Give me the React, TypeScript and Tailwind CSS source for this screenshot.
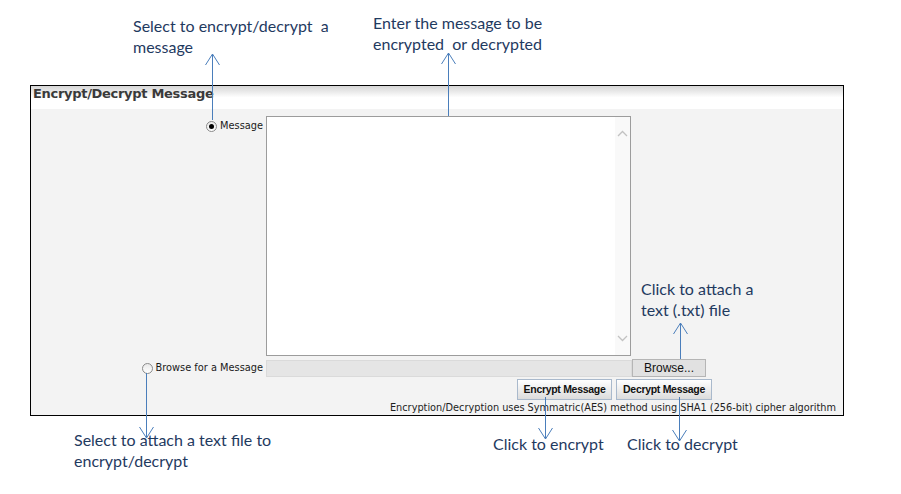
import React from "react";

const note = "absolute text-[16px] leading-[21px] text-[#1f3a5f] whitespace-pre [font-family:Lato,'Open_Sans',sans-serif]";

function Radio({ checked }: { checked?: boolean }) {
  return (
    <span className="w-[11px] h-[11px] rounded-full border border-[#8a8a8a] bg-gradient-to-b from-[#e8e8e8] to-white flex items-center justify-center shrink-0">
      {checked ? <span className="w-[5px] h-[5px] rounded-full bg-black" /> : null}
    </span>
  );
}

function Arrow({ x, y1, y2, up }: { x: number; y1: number; y2: number; up?: boolean }) {
  const tip = up ? y1 : y2;
  const d = up ? 11 : -11;
  return (
    <g stroke="#4a7ebb" strokeWidth={1} fill="none">
      <line x1={x + 0.5} y1={y1} x2={x + 0.5} y2={y2} />
      <polyline points={`${x - 6.5},${tip + d} ${x + 0.5},${tip} ${x + 7.5},${tip + d}`} />
    </g>
  );
}

export default function App() {
  return (
    <div className="relative w-[901px] h-[494px] bg-white overflow-hidden">
      <div className="ml-[30px] mt-[85px] w-[814px] h-[331px] border border-black flex flex-col [font-family:'DejaVu_Sans',Verdana,sans-serif]">
        <div className="h-[23px] shrink-0 bg-gradient-to-b from-[#d6d6d6] via-white to-white pl-[2px] leading-[13px]">
          <span className="text-[13px] leading-[13px] font-bold text-[#3a3a3a] tracking-[-0.3px]">Encrypt/Decrypt Message</span>
        </div>
        <div className="flex-1 bg-[#f3f3f3] pt-[7px] flex flex-col">
          <div className="flex">
            <div className="w-[232px] flex justify-end items-center gap-[3px] pt-[4px] self-start">
              <Radio checked />
              <span className="text-[9.8px] leading-[12px] text-[#1a1a1a]">Message</span>
            </div>
            <div className="ml-[3px] w-[365px] h-[240px] border border-[#9c9c9c] bg-white flex justify-end">
              <div className="w-[15px] h-full bg-[#f9f9f9] flex flex-col items-center justify-between py-[13px]">
                <svg width="11" height="7" viewBox="0 0 11 7"><polyline points="1,6 5.5,1.5 10,6" fill="none" stroke="#c2c2c2" strokeWidth="1.3" /></svg>
                <svg width="11" height="7" viewBox="0 0 11 7"><polyline points="1,1 5.5,5.5 10,1" fill="none" stroke="#c2c2c2" strokeWidth="1.3" /></svg>
              </div>
            </div>
          </div>
          <div className="flex mt-[3px] items-center">
            <div className="w-[232px] flex justify-end items-center gap-[3px]">
              <Radio />
              <span className="text-[9.8px] leading-[12px] text-[#1a1a1a]">Browse for a Message</span>
            </div>
            <div className="ml-[3px] w-[366px] h-[17px] bg-[#e5e5e5] border border-[#dadada]" />
            <div className="w-[74px] h-[18px] bg-[#e1e1e1] border border-[#b5b5b5] flex items-center justify-center text-[12px] text-[#111] [font-family:'Liberation_Sans',Arial,sans-serif]">
              Browse...
            </div>
          </div>
          <div className="flex gap-[4px] mt-[2px] ml-[486px]">
            <div className="w-[95px] h-[21px] border border-[#a9b9cc] bg-gradient-to-b from-white to-[#dcdcdc] flex items-center justify-center text-[10.5px] tracking-[-0.3px] font-bold text-[#111] [font-family:'Liberation_Sans',Arial,sans-serif]">
              Encrypt Message
            </div>
            <div className="w-[96px] h-[21px] border border-[#a9b9cc] bg-gradient-to-b from-white to-[#dcdcdc] flex items-center justify-center text-[10.5px] tracking-[-0.3px] font-bold text-[#111] [font-family:'Liberation_Sans',Arial,sans-serif]">
              Decrypt Message
            </div>
          </div>
          <div className="flex justify-end pr-[7px] mt-[2px]">
            <span className="text-[9.75px] leading-[12px] text-[#1e1e1e]">Encryption/Decryption uses Symmatric(AES) method using SHA1 (256-bit) cipher algorithm</span>
          </div>
        </div>
      </div>

      <div className={note} style={{ left: 133, top: 15 }}>{"Select to encrypt/decrypt  a\nmessage"}</div>
      <div className={note} style={{ left: 373, top: 12 }}>{"Enter the message to be\nencrypted  or decrypted"}</div>
      <div className={note} style={{ left: 641, top: 278 }}>{"Click to attach a\ntext (.txt) file"}</div>
      <div className={note} style={{ left: 74, top: 429 }}>{"Select to attach a text file to\nencrypt/decrypt"}</div>
      <div className={note} style={{ left: 493, top: 433 }}>Click to encrypt</div>
      <div className={note} style={{ left: 627, top: 433 }}>Click to decrypt</div>

      <svg className="absolute inset-0 pointer-events-none" width="901" height="494">
        <Arrow x={212} y1={54} y2={120} up />
        <Arrow x={448} y1={53} y2={116} up />
        <Arrow x={680} y1={323} y2={359} up />
        <Arrow x={146} y1={373} y2={438} />
        <Arrow x={545} y1={397} y2={439} />
        <Arrow x={679} y1={397} y2={441} />
      </svg>
    </div>
  );
}
